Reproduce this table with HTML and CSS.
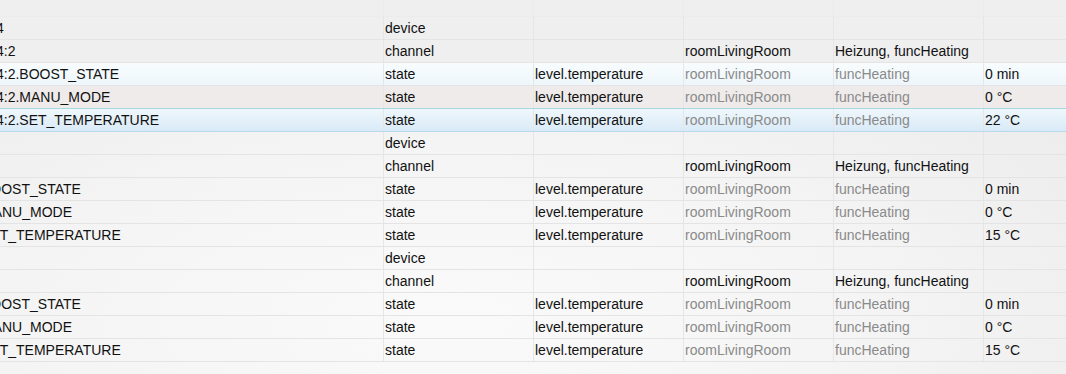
FILE: index.html
```html
<!DOCTYPE html>
<html>
<head>
<meta charset="utf-8">
<link rel="stylesheet" href="styles.css">
</head>
<body>
<div class="list">
  <div class="row top"><div class="c id"></div><div class="c"></div><div class="c"></div><div class="c"></div><div class="c"></div><div class="c"></div></div>

  <div class="row g1"><div class="c id"><span class="tail">4</span></div><div class="c">device</div><div class="c"></div><div class="c"></div><div class="c"></div><div class="c"></div></div>
  <div class="row g1"><div class="c id"><span class="tail">4:2</span></div><div class="c">channel</div><div class="c"></div><div class="c">roomLivingRoom</div><div class="c">Heizung, funcHeating</div><div class="c"></div></div>
  <div class="row g1 hover"><div class="c id"><span class="tail">4:2.BOOST_STATE</span></div><div class="c">state</div><div class="c">level.temperature</div><div class="c dim">roomLivingRoom</div><div class="c dim">funcHeating</div><div class="c">0 min</div></div>
  <div class="row g1 alt"><div class="c id"><span class="tail">4:2.MANU_MODE</span></div><div class="c">state</div><div class="c">level.temperature</div><div class="c dim">roomLivingRoom</div><div class="c dim">funcHeating</div><div class="c">0 °C</div></div>
  <div class="row g1 selected"><div class="c id"><span class="tail">4:2.SET_TEMPERATURE</span></div><div class="c">state</div><div class="c">level.temperature</div><div class="c dim">roomLivingRoom</div><div class="c dim">funcHeating</div><div class="c">22 °C</div></div>

  <div class="row g2"><div class="c id"></div><div class="c">device</div><div class="c"></div><div class="c"></div><div class="c"></div><div class="c"></div></div>
  <div class="row g2"><div class="c id"></div><div class="c">channel</div><div class="c"></div><div class="c">roomLivingRoom</div><div class="c">Heizung, funcHeating</div><div class="c"></div></div>
  <div class="row g2"><div class="c id"><span class="tail">BOOST_STATE</span></div><div class="c">state</div><div class="c">level.temperature</div><div class="c dim">roomLivingRoom</div><div class="c dim">funcHeating</div><div class="c">0 min</div></div>
  <div class="row g2"><div class="c id"><span class="tail">MANU_MODE</span></div><div class="c">state</div><div class="c">level.temperature</div><div class="c dim">roomLivingRoom</div><div class="c dim">funcHeating</div><div class="c">0 °C</div></div>
  <div class="row g2"><div class="c id"><span class="tail">SET_TEMPERATURE</span></div><div class="c">state</div><div class="c">level.temperature</div><div class="c dim">roomLivingRoom</div><div class="c dim">funcHeating</div><div class="c">15 °C</div></div>

  <div class="row g2"><div class="c id"></div><div class="c">device</div><div class="c"></div><div class="c"></div><div class="c"></div><div class="c"></div></div>
  <div class="row g2"><div class="c id"></div><div class="c">channel</div><div class="c"></div><div class="c">roomLivingRoom</div><div class="c">Heizung, funcHeating</div><div class="c"></div></div>
  <div class="row g2"><div class="c id"><span class="tail">BOOST_STATE</span></div><div class="c">state</div><div class="c">level.temperature</div><div class="c dim">roomLivingRoom</div><div class="c dim">funcHeating</div><div class="c">0 min</div></div>
  <div class="row g2"><div class="c id"><span class="tail">MANU_MODE</span></div><div class="c">state</div><div class="c">level.temperature</div><div class="c dim">roomLivingRoom</div><div class="c dim">funcHeating</div><div class="c">0 °C</div></div>
  <div class="row g2"><div class="c id"><span class="tail">SET_TEMPERATURE</span></div><div class="c">state</div><div class="c">level.temperature</div><div class="c dim">roomLivingRoom</div><div class="c dim">funcHeating</div><div class="c">15 °C</div></div>
</div>
</body>
</html>
```
FILE: styles.css
```css
html, body {
  margin: 0;
  height: 100%;
}
body {
  overflow: hidden;
  font-family: "Liberation Sans", Arial, sans-serif;
  font-size: 14px;
  color: #111;
  background:
    radial-gradient(ellipse 75% 85% at 42% 85%, #fafafa 0%, #f4f4f4 55%, rgba(236,236,236,0) 100%),
    #ececec;
}
.list {
  display: flex;
  flex-direction: column;
}
.row {
  display: grid;
  grid-template-columns: 383px 150px 150px 150px 150px 150px;
  height: 23px;
  box-sizing: border-box;
  border-bottom: 1px solid #e4e4e4;
}
.row.top {
  height: 17px;
  background: #efefef;
  border-bottom-color: #ececec;
}
.row.g1 {
  background: #efefef;
}
.c {
  line-height: 22px;
  white-space: nowrap;
  overflow: hidden;
  padding-left: 1px;
  border-left: 1px solid #e6e6e6;
}
.top .c {
  border-left-color: #ebebeb;
}
.c.id {
  border-left: 0;
  padding-left: 0;
}
.tail {
  display: inline-block;
}
.g1 .tail {
  margin-left: -4px;
}
.g2 .tail {
  margin-left: -19px;
}
.dim {
  color: #8a8a8a;
}
.row.hover {
  background: linear-gradient(#f8fcfe, #eef6fb);
}
.row.alt {
  background: #efebeb;
}
.row.selected {
  background: linear-gradient(#eff7fc, #d9eaf7);
  border-top: 1px solid #a6d8e2;
  border-bottom: 1px solid #b7d9ea;
  margin-top: -1px;
  height: 24px;
}
```
